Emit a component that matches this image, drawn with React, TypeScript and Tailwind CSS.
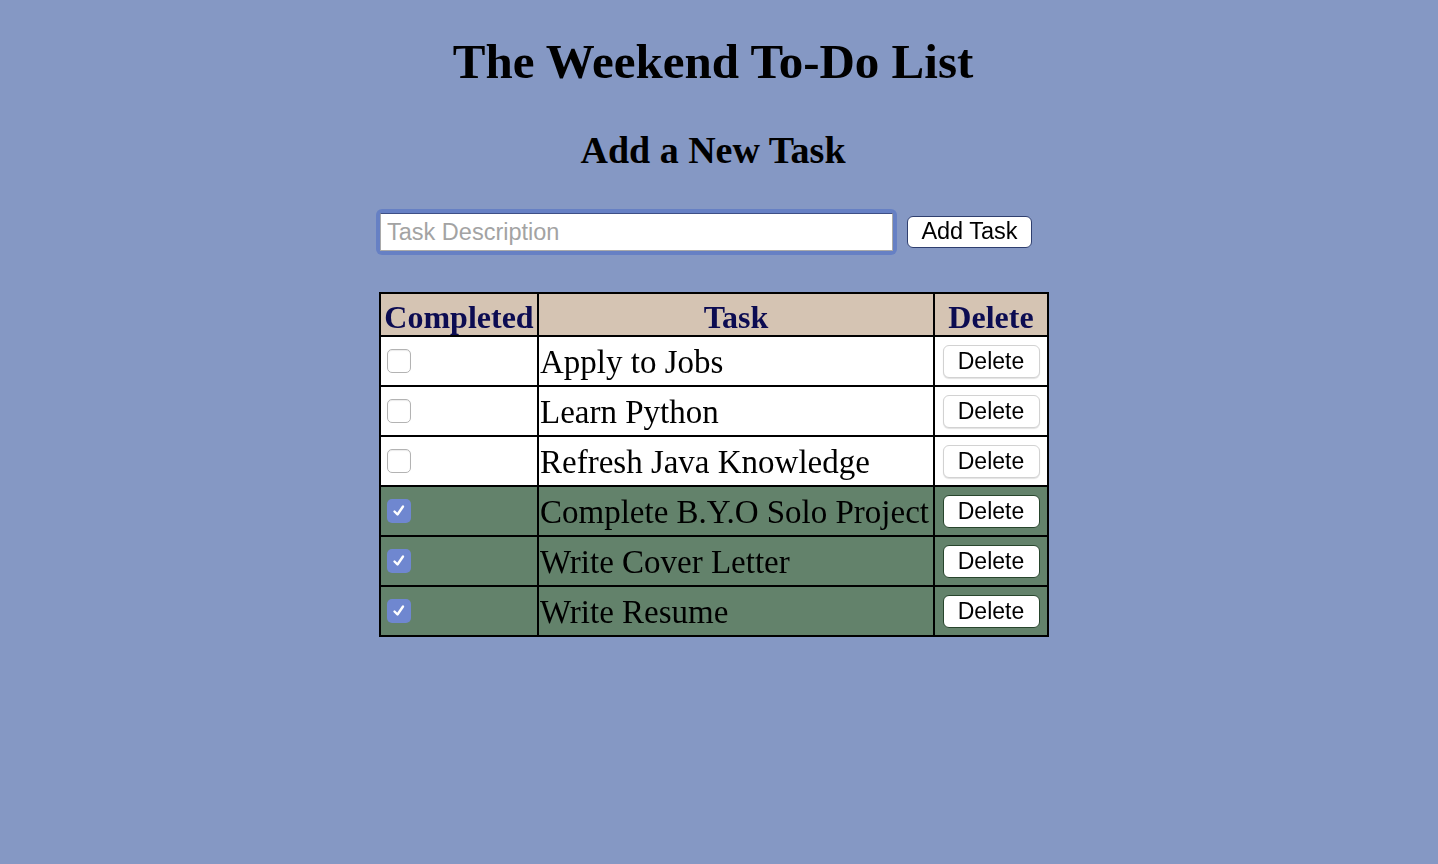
import { useState } from 'react';

type Task = { id: number; text: string; done: boolean };

const initialTasks: Task[] = [
    { id: 1, text: 'Apply to Jobs', done: false },
    { id: 2, text: 'Learn Python', done: false },
    { id: 3, text: 'Refresh Java Knowledge', done: false },
    { id: 4, text: 'Complete B.Y.O Solo Project', done: true },
    { id: 5, text: 'Write Cover Letter', done: true },
    { id: 6, text: 'Write Resume', done: true },
];

function Checkbox({ checked, onChange }: { checked: boolean; onChange: () => void }) {
    return (
        <button
            onClick={onChange}
            className={`flex h-[24px] w-[24px] items-center justify-center rounded-[5px] ${
                checked ? 'bg-[#6f87d0]' : 'border border-[#b3b3b3] bg-white shadow-[inset_0_1px_1px_rgba(0,0,0,0.08)]'
            }`}
        >
            {checked && (
                <svg width="18" height="18" viewBox="0 0 18 18" fill="none">
                    <path d="M4.5 9.5 L7.5 12.5 L13 4.5" stroke="white" strokeWidth="2.4" strokeLinecap="round" strokeLinejoin="round" />
                </svg>
            )}
        </button>
    );
}

export default function App() {
    const [tasks, setTasks] = useState(initialTasks);
    const [draft, setDraft] = useState('');

    const toggle = (id: number) =>
        setTasks((prev) => prev.map((t) => (t.id === id ? { ...t, done: !t.done } : t)));
    const remove = (id: number) => setTasks((prev) => prev.filter((t) => t.id !== id));
    const add = () => {
        if (!draft.trim()) return;
        setTasks((prev) => [...prev, { id: Date.now(), text: draft.trim(), done: false }]);
        setDraft('');
    };

    return (
        <div className="min-h-[864px] w-full bg-[#8598c4] font-['Liberation_Serif',serif] text-black">
            <div className="flex flex-col items-center pr-[12px]">
                <h1 className="mt-[38px] text-[49px] font-bold leading-[48px]">The Weekend To-Do List</h1>
                <h2 className="mt-[45px] text-[38px] font-bold leading-[38px]">Add a New Task</h2>
            </div>

            {/* New task form */}
            <div className="mt-[40px] flex items-center justify-center gap-[10px] pr-[30px]">
                <div className="rounded-[6px] bg-[#6680c4] p-[4px]">
                    <input
                        autoFocus
                        value={draft}
                        onChange={(e) => setDraft(e.target.value)}
                        placeholder="Task Description"
                        className="block h-[38px] w-[513px] border border-[#a9a9a9] border-t-[#3e4f86] bg-white px-[6px] font-['Liberation_Sans',sans-serif] text-[23.5px] text-black caret-black outline-none placeholder:text-[#a3a3a3]"
                    />
                </div>
                <button
                    onClick={add}
                    className="h-[32px] w-[125px] rounded-[6px] border border-[#2f3f6f] bg-white font-['Liberation_Sans',sans-serif] text-[23.5px] leading-none"
                >
                    Add Task
                </button>
            </div>

            {/* Task table */}
            <div className="mt-[37px] flex justify-center pr-[10px]">
                <table className="w-[668px] table-fixed border-collapse border-2 border-black">
                    <colgroup>
                        <col className="w-[158px]" />
                        <col className="w-[396px]" />
                        <col className="w-[114px]" />
                    </colgroup>
                    <thead>
                        <tr className="h-[43px] bg-[#d5c4b3] text-[32px] font-bold leading-none text-[#0c0c52]">
                            <th className="border-2 border-black px-0 pt-[4px]">Completed</th>
                            <th className="border-2 border-black pt-[4px]">Task</th>
                            <th className="border-2 border-black pt-[4px]">Delete</th>
                        </tr>
                    </thead>
                    <tbody>
                        {tasks.map((t) => (
                            <tr key={t.id} className={`h-[50px] ${t.done ? 'bg-[#63826b]' : 'bg-white'}`}>
                                <td className="border-2 border-black pl-[6px] align-middle">
                                    <Checkbox checked={t.done} onChange={() => toggle(t.id)} />
                                </td>
                                <td className="whitespace-nowrap border-2 border-black pl-[1px] pt-[2px] text-[33px] leading-none">
                                    {t.text}
                                </td>
                                <td className="border-2 border-black text-center align-middle">
                                    <button
                                        onClick={() => remove(t.id)}
                                        className={`h-[33px] w-[97px] rounded-[6px] bg-white font-['Liberation_Sans',sans-serif] text-[23px] leading-none ${
                                            t.done ? 'border border-[#27452c]' : 'border border-[#d2d2d2] shadow-[0_1px_1px_rgba(0,0,0,0.12)]'
                                        }`}
                                    >
                                        Delete
                                    </button>
                                </td>
                            </tr>
                        ))}
                    </tbody>
                </table>
            </div>
        </div>
    );
}
